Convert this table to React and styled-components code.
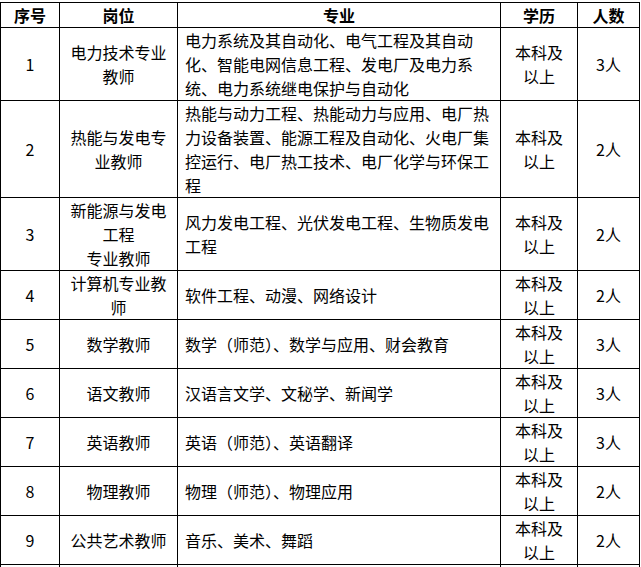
import React from "react";
import styled, { createGlobalStyle } from "styled-components";

const Global = createGlobalStyle`
  html, body { margin: 0; padding: 0; background: #fff; }
  body { font-family: "Microsoft YaHei", "Noto Sans CJK SC", "Noto Sans", sans-serif; color: #000; }
`;

const Page = styled.div`
  padding-top: 2px;
  width: 641px;
  height: 567px;
  overflow: hidden;
`;

const Table = styled.table`
  border-collapse: collapse;
  table-layout: fixed;
  width: 639px;
  font-size: 16px;
  line-height: 24px;
`;

const Col = styled.col`
  width: ${(p) => p.$w}px;
`;

const HeadCell = styled.th`
  border: 1px solid #000;
  padding: 0;
  font-weight: bold;
  text-align: center;
  vertical-align: middle;
  height: 24px;
`;

const Cell = styled.td`
  border: 1px solid #000;
  padding: 0 ${(p) => (p.$left ? "7px" : "8px")};
  text-align: ${(p) => (p.$left ? "left" : "center")};
  vertical-align: middle;
  height: ${(p) => (p.$h ? p.$h + "px" : "auto")};
  word-break: break-all;
  line-break: strict;
`;

const rows = [
  ["1", "电力技术专业教师", "电力系统及其自动化、电气工程及其自动化、智能电网信息工程、发电厂及电力系统、电力系统继电保护与自动化", "3人"],
  ["2", "热能与发电专业教师", "热能与动力工程、热能动力与应用、电厂热力设备装置、能源工程及自动化、火电厂集控运行、电厂热工技术、电厂化学与环保工程", "2人"],
  ["3", ["新能源与发电工程", "专业教师"], "风力发电工程、光伏发电工程、生物质发电工程", "2人"],
  ["4", "计算机专业教师", "软件工程、动漫、网络设计", "2人"],
  ["5", "数学教师", "数学（师范）、数学与应用、财会教育", "3人"],
  ["6", "语文教师", "汉语言文学、文秘学、新闻学", "3人"],
  ["7", "英语教师", "英语（师范）、英语翻译", "3人"],
  ["8", "物理教师", "物理（师范）、物理应用", "2人"],
  ["9", "公共艺术教师", "音乐、美术、舞蹈", "2人"],
];

export default function App() {
  return (
    <Page>
      <Global />
      <Table>
        <colgroup>
          <Col $w={59} />
          <Col $w={118} />
          <Col $w={323} />
          <Col $w={77} />
          <Col $w={62} />
        </colgroup>
        <thead>
          <tr>
            <HeadCell>序号</HeadCell>
            <HeadCell>岗位</HeadCell>
            <HeadCell>专业</HeadCell>
            <HeadCell>学历</HeadCell>
            <HeadCell>人数</HeadCell>
          </tr>
        </thead>
        <tbody>
          {rows.map(([n, post, major, count]) => (
            <tr key={n}>
              <Cell>{n}</Cell>
              <Cell>
                {Array.isArray(post)
                  ? post.map((p, i) => (
                      <React.Fragment key={i}>
                        {i > 0 && <br />}
                        {p}
                      </React.Fragment>
                    ))
                  : post}
              </Cell>
              <Cell $left>{major}</Cell>
              <Cell>本科及以上</Cell>
              <Cell>{count}</Cell>
            </tr>
          ))}
          <tr>
            <Cell $h={48} />
            <Cell />
            <Cell $left />
            <Cell />
            <Cell />
          </tr>
        </tbody>
      </Table>
    </Page>
  );
}
